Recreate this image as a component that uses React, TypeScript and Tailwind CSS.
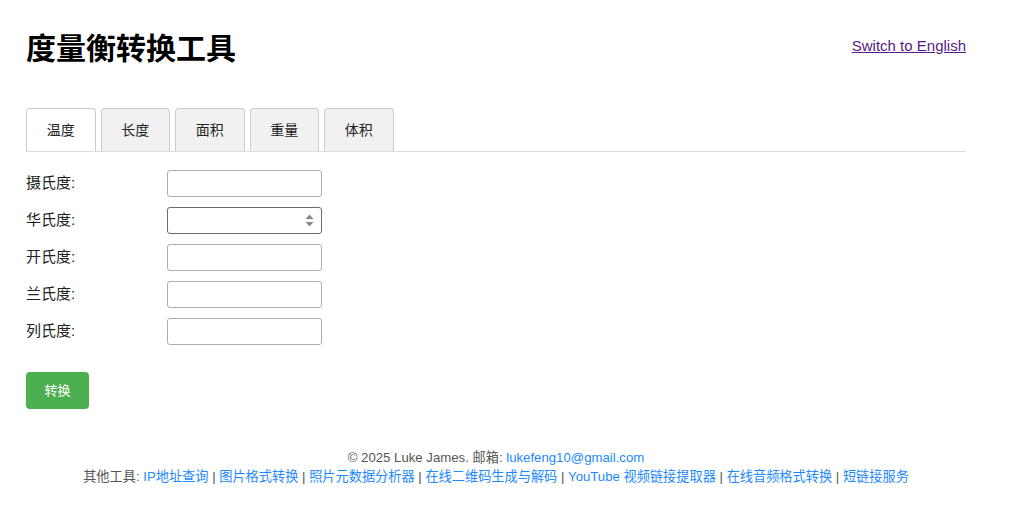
import { useState } from 'react';

const tabs = ['温度', '长度', '面积', '重量', '体积'];

const fields = [
  { key: 'c', label: '摄氏度:' },
  { key: 'f', label: '华氏度:', spin: true },
  { key: 'k', label: '开氏度:' },
  { key: 'r', label: '兰氏度:' },
  { key: 're', label: '列氏度:' },
];

const tools = [
  'IP地址查询',
  '图片格式转换',
  '照片元数据分析器',
  '在线二维码生成与解码',
  'YouTube 视频链接提取器',
  '在线音频格式转换',
  '短链接服务',
];

function Spinner() {
  return (
    <svg
      className="absolute right-[8px] top-[7px] pointer-events-none"
      width="9"
      height="13"
      viewBox="0 0 9 13"
    >
      <path d="M4.5 0.5 L8.5 5 L0.5 5 Z" fill="#8a8a8a" />
      <path d="M0.5 8 L8.5 8 L4.5 12.5 Z" fill="#8a8a8a" />
    </svg>
  );
}

export default function App() {
  const [active, setActive] = useState(0);
  const [values, setValues] = useState<Record<string, string>>({});

  return (
    <div
      className="min-h-[521px] bg-white text-[#222]"
      style={{ fontFamily: '"Liberation Sans", "Noto Sans CJK SC", sans-serif' }}
    >
      <div className="w-[940px] ml-[26px]">
        {/* Header */}
        <div className="pt-[28px] flex justify-between">
          <h1 className="text-[30px] leading-[42px] font-bold text-black">度量衡转换工具</h1>
          <a href="#" className="mt-[9px] text-[15px] leading-[18px] text-[#551a8b] underline">
            Switch to English
          </a>
        </div>

        {/* Tabs */}
        <div className="mt-[38px] flex gap-[5px] border-b border-[#dddddd]">
          {tabs.map((t, i) => (
            <button
              key={t}
              onClick={() => setActive(i)}
              className={`h-[43px] w-[69.5px] border border-b-0 border-[#cccccc] rounded-t-[4px] text-[14px] text-[#222] ${
                i === active ? 'bg-white' : 'bg-[#f1f1f1]'
              }`}
            >
              {t}
            </button>
          ))}
        </div>

        {/* Form */}
        <div className="mt-[18px] flex flex-col gap-[10px]">
          {fields.map((f) => (
            <div key={f.key} className="flex items-center h-[27px]">
              <label className="w-[141px] text-[15px] text-[#222]">{f.label}</label>
              <div className="relative">
                <input
                  value={values[f.key] ?? ''}
                  onChange={(e) => setValues({ ...values, [f.key]: e.target.value })}
                  className={`w-[155px] h-[27px] rounded-[3px] border px-[6px] text-[14px] outline-none ${
                    f.spin ? 'border-[#6b6b6b]' : 'border-[#adadad]'
                  }`}
                />
                {f.spin && <Spinner />}
              </div>
            </div>
          ))}
        </div>

        <button className="mt-[27px] w-[63px] h-[37px] rounded-[4px] bg-[#4caf50] text-white text-[13px]">
          转换
        </button>

        {/* Footer */}
        <div className="mt-[39px] text-center text-[13.2px] leading-[19px] text-[#555]">
          <p>
            © 2025 Luke James. 邮箱:{' '}
            <a href="#" className="text-[#1e88ff]">
              lukefeng10@gmail.com
            </a>
          </p>
          <p>
            其他工具:{' '}
            {tools.map((t, i) => (
              <span key={t}>
                <a href="#" className="text-[#1e88ff]">
                  {t}
                </a>
                {i < tools.length - 1 && ' | '}
              </span>
            ))}
          </p>
        </div>
      </div>
    </div>
  );
}
